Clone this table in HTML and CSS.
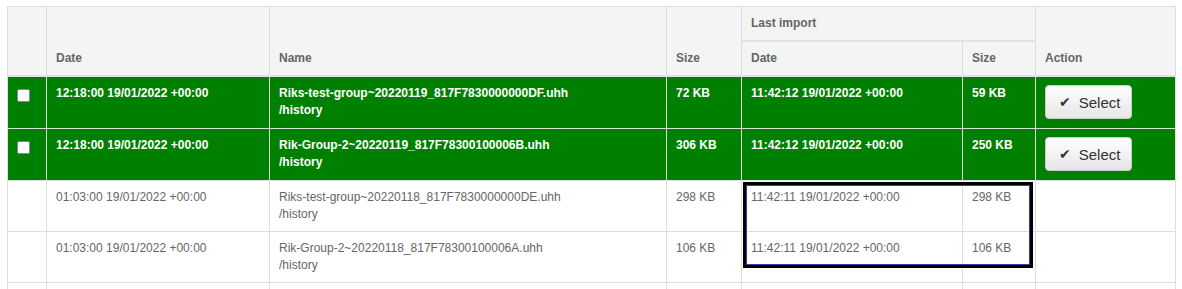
FILE: index.html
```html
<!DOCTYPE html>
<html>
<head>
<meta charset="utf-8">
<link rel="stylesheet" href="styles.css">
</head>
<body>
<div class="wrap">
<table class="grid">
  <colgroup>
    <col class="c-chk"><col class="c-date"><col class="c-name"><col class="c-size"><col class="c-ldate"><col class="c-lsize"><col class="c-act">
  </colgroup>
  <thead>
    <tr class="h1">
      <th rowspan="2"></th>
      <th rowspan="2">Date</th>
      <th rowspan="2">Name</th>
      <th rowspan="2">Size</th>
      <th colspan="2" class="group">Last import</th>
      <th rowspan="2">Action</th>
    </tr>
    <tr class="h2">
      <th>Date</th>
      <th>Size</th>
    </tr>
  </thead>
  <tbody>
    <tr class="sel">
      <td class="chk"><span class="box"></span></td>
      <td>12:18:00 19/01/2022 +00:00</td>
      <td>Riks-test-group~20220119_817F7830000000DF.uhh<br>/history</td>
      <td>72 KB</td>
      <td>11:42:12 19/01/2022 +00:00</td>
      <td>59 KB</td>
      <td class="act"><button class="btn"><span class="ic">&#10004;</span>Select</button></td>
    </tr>
    <tr class="sel">
      <td class="chk"><span class="box"></span></td>
      <td>12:18:00 19/01/2022 +00:00</td>
      <td>Rik-Group-2~20220119_817F78300100006B.uhh<br>/history</td>
      <td>306 KB</td>
      <td>11:42:12 19/01/2022 +00:00</td>
      <td>250 KB</td>
      <td class="act"><button class="btn"><span class="ic">&#10004;</span>Select</button></td>
    </tr>
    <tr>
      <td></td>
      <td>01:03:00 19/01/2022 +00:00</td>
      <td>Riks-test-group~20220118_817F7830000000DE.uhh<br>/history</td>
      <td>298 KB</td>
      <td>11:42:11 19/01/2022 +00:00</td>
      <td>298 KB</td>
      <td></td>
    </tr>
    <tr>
      <td></td>
      <td>01:03:00 19/01/2022 +00:00</td>
      <td>Rik-Group-2~20220118_817F78300100006A.uhh<br>/history</td>
      <td>106 KB</td>
      <td>11:42:11 19/01/2022 +00:00</td>
      <td>106 KB</td>
      <td></td>
    </tr>
    <tr>
      <td></td><td>&nbsp;<br>&nbsp;</td><td></td><td></td><td></td><td></td><td></td>
    </tr>
  </tbody>
</table>
<div class="highlight"></div>
</div>
</body>
</html>
```
FILE: styles.css
```css
html, body {
  margin: 0;
  padding: 0;
  background: #fff;
  overflow: hidden;
}
.wrap {
  position: relative;
  padding: 6px 0 0 7px;
  font-family: "Liberation Sans", Arial, sans-serif;
  font-size: 12px;
  line-height: 17px;
}
.grid {
  border-collapse: collapse;
  table-layout: fixed;
  width: 1168px;
}
.c-chk { width: 39px; }
.c-date { width: 223px; }
.c-name { width: 397px; }
.c-size { width: 75px; }
.c-ldate { width: 221px; }
.c-lsize { width: 73px; }
.c-act { width: 140px; }

.grid th, .grid td {
  border: 1px solid #dddddd;
  padding: 8px 9px;
  text-align: left;
  vertical-align: top;
}
.grid th {
  background: #f4f4f4;
  color: #666;
  font-weight: bold;
  vertical-align: bottom;
  padding: 8px 9px 8px;
}
.grid thead .h1 th { border-top: 1px solid #e2e2e2; }
.grid th.group {
  border-bottom: 2px solid #e2e2e2;
  padding: 8px 9px 8px;
}
.grid .h2 th, .grid .h1 th[rowspan] {
  border-bottom: 2px solid #e2e2e2;
}
.grid td { color: #666; }
.grid tr.sel td {
  background: #008000;
  color: #fff;
  font-weight: bold;
  border-color: #d8e6d8;
}
.grid td.chk { padding: 12px 9px 8px; }
.box {
  display: block;
  width: 11px;
  height: 11px;
  background: #fff;
  border: 1px solid #8a8a8a;
  border-radius: 2px;
}
.grid td.act { padding: 8px 9px 9px; }
.btn {
  display: inline-flex;
  align-items: center;
  gap: 8px;
  height: 34px;
  width: 87px;
  padding: 0 12px 0 13px;
  border: 1px solid #cccccc;
  border-radius: 4px;
  background: linear-gradient(#ffffff, #e6e6e6);
  color: #333;
  font-family: "Liberation Sans", Arial, sans-serif;
  font-size: 15px;
  font-weight: normal;
  box-sizing: border-box;
}
.ic {
  font-size: 14px;
  line-height: 1;
  color: #333;
  font-family: "DejaVu Sans", sans-serif;
  font-weight: bold;
}
.highlight {
  position: absolute;
  left: 743px;
  top: 182px;
  width: 284px;
  height: 80px;
  border: 3px solid #000;
  box-shadow: inset 0 0 0 1px #3a3ab0;
}
```
